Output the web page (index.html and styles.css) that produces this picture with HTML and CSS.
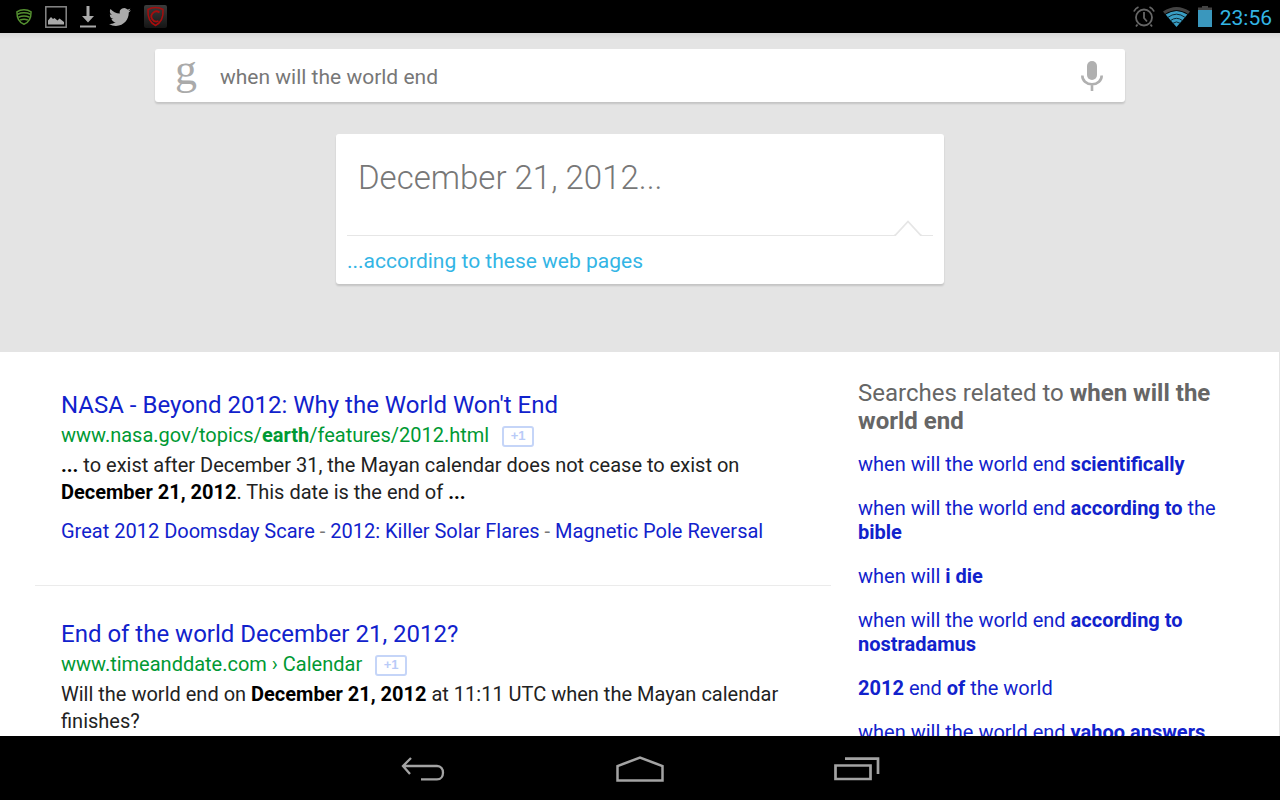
FILE: index.html
```
<!DOCTYPE html>
<html lang="en">
<head>
    <meta charset="UTF-8">
    <meta name="viewport" content="width=device-width, initial-scale=1">
    <title>when will the world end</title>
    <link rel="stylesheet" href="styles.css">
</head>
<body>
    <header class="status-bar">
        <div class="status-icons">
            <svg width="16" height="16" viewBox="0 0 16 16" fill="none" stroke="#549030" stroke-width="1.5">
                <path d="M8 .8C5.5 .8 3 1.4 .9 2.8 .9 8.5 2.5 13.5 8 15.2 13.500 13.5 15.1 8.5 15.1 2.8 13 1.4 10.5 .8 8 .8z"/>
                <path d="M1.5 5.2q6.5-2.800 13 0M2.500 8.200q5.500-2.400 11 0M4.200 11q3.800-1.700 7.600 0"/>
            </svg>
            <svg width="22" height="22" viewBox="0 0 22 22">
                <rect x=".8" y=".8" width="20.4" height="20.4" fill="none" stroke="#888" stroke-width="1.5"/>
                <path d="M3 18.500v-4l3-3.500 2 2 1.500-1 3 2.500 2-2 4.500 3.500v2.500z" fill="#aaa"/>
            </svg>
            <svg width="16" height="22" viewBox="0 0 16 22" fill="#aaa">
                <path d="M6.500 0h3v10H14l-6 6.500L2 10h4.500zM0 19.500h16v2H0z"/>
            </svg>
            <svg width="22" height="22" viewBox="0 0 24 24" fill="#aaa">
                <path d="M23.950 4.570a10 10 0 0 1-2.820.770 4.960 4.960 0 0 0 2.160-2.720c-.950.550-2 .950-3.120 1.180a4.920 4.920 0 0 0-8.380 4.480C7.690 8.090 4.070 6.130 1.640 3.160a4.820 4.820 0 0 0-.670 2.480c0 1.710.870 3.210 2.190 4.100a4.900 4.900 0 0 1-2.230-.620v.060a4.920 4.920 0 0 0 3.950 4.830 5 5 0 0 1-2.210.080 4.940 4.940 0 0 0 4.600 3.420A9.870 9.870 0 0 1 0 19.540a13.990 13.990 0 0 0 7.560 2.210c9.050 0 14-7.500 14-13.980 0-.210 0-.420-.020-.630a9.940 9.940 0 0 0 2.410-2.570z"/>
            </svg>
            <svg width="23" height="23" viewBox="0 0 23 23">
                <defs><linearGradient id="tile" x1="0" y1="0" x2="0" y2="1"><stop offset="0" stop-color="#3c3c3c"/><stop offset="1" stop-color="#151515"/></linearGradient></defs>
                <rect width="23" height="23" rx="2" fill="url(#tile)"/>
                <path d="M11.500 2.500c2.500 0 5 .5 7.500 2 .5 7-1.500 13-7.500 16-6-3-8-9-7.500-16 2.500-1.500 5-2 7.500-2z" fill="none" stroke="#a80d0d" stroke-width="1.500"/>
                <path d="M15.500 7.500a5 5 0 1 0-1 8.500" fill="none" stroke="#a80d0d" stroke-width="1.800"/>
            </svg>
        </div>
        <div class="status-icons status-right">
            <svg width="22" height="22" viewBox="0 0 22 22" fill="none" stroke="#666" stroke-width="1.8">
                <circle cx="11" cy="11.500" r="8"/>
                <path d="M11 6v6l3 3.500M.9 5.500Q2 2.500 5.500 1M21.100 5.500Q20 2.500 16.500 1M4.500 18.500L3 20.500M17.500 18.500l1.500 2"/>
            </svg>
            <svg width="27" height="20" viewBox="0 0 27 20">
                <path d="M0 4.500Q13.500-4.500 27 4.500L25 7Q13.500-.5 2 7z" fill="#444"/>
                <path d="M2.600 7.600Q13.500 .3 24.400 7.600L13.500 20z" fill="#3a9ec4"/>
                <path d="M4.700 10.500Q13.500 3.800 22.300 10.500M7.500 13.600Q13.500 9 19.500 13.600M9.800 16.300Q13.500 13.500 17.200 16.300" fill="none" stroke="#0d2833" stroke-width="1"/>
            </svg>
            <svg width="14" height="21" viewBox="0 0 14 21">
                <path d="M4 0h6v1.500h4V4H0V1.500h4z" fill="#444"/>
                <path d="M0 4h14v17H0z" fill="#3a97bd"/>
            </svg>
            <time class="clock">23:56</time>
        </div>
    </header>

    <main class="screen">
        <section class="top">
            <form class="search-box">
                <span class="logo" aria-hidden="true">g</span>
                <input class="search-input" type="text" aria-label="Search" value="when will the world end">
                <button class="mic" type="button" aria-label="Voice search">
                    <svg width="22" height="30" viewBox="0 0 22 30">
                        <rect x="6" y="0" width="10" height="19" rx="5" fill="#b0b0b0"/>
                        <path d="M1.300 14.500c0 5 4 8.800 9.700 8.800s9.700-3.800 9.700-8.800M11 23v7" fill="none" stroke="#b0b0b0" stroke-width="2.600"/>
                    </svg>
                </button>
            </form>
            <article class="answer-card">
                <h1 class="answer">December 21, 2012...</h1>
                <div class="divider">
                    <span class="line"></span>
                    <svg width="28" height="16" viewBox="0 0 28 16"><path d="M0 15.500h1L14 1.500l13 14h1" fill="none" stroke="#e6e6e6" stroke-width="1.800"/></svg>
                    <span class="line line-end"></span>
                </div>
                <a class="source" href="#results">...according to these web pages</a>
            </article>
        </section>

        <div class="columns">
            <section class="results" id="results">
                <article class="result">
                    <h2 class="title"><a href="#">NASA - Beyond 2012: Why the World Won't End</a></h2>
                    <div class="url">www.nasa.gov/topics/<b>earth</b>/features/2012.html <button class="plus" type="button">+1</button></div>
                    <p class="snippet"><b>...</b> to exist after December 31, the Mayan calendar does not cease to exist on <b>December 21, 2012</b>. This date is the end of <b>...</b></p>
                    <p class="sitelinks"><a href="#">Great 2012 Doomsday Scare</a> - <a href="#">2012: Killer Solar Flares</a> - <a href="#">Magnetic Pole Reversal</a></p>
                </article>
                <article class="result">
                    <h2 class="title"><a href="#">End of the world December 21, 2012?</a></h2>
                    <div class="url">www.timeanddate.com › Calendar <button class="plus" type="button">+1</button></div>
                    <p class="snippet">Will the world end on <b>December 21, 2012</b> at 11:11 UTC when the Mayan calendar finishes?</p>
                </article>
            </section>

            <aside class="related">
                <h2 class="related-title">Searches related to <b>when will the world end</b></h2>
                <ul class="related-list">
                    <li><a href="#">when will the world end <b>scientifically</b></a></li>
                    <li><a href="#">when will the world end <b>according to</b> the <b>bible</b></a></li>
                    <li><a href="#">when will <b>i die</b></a></li>
                    <li><a href="#">when will the world end <b>according to nostradamus</b></a></li>
                    <li><a href="#"><b>2012</b> end <b>of</b> the world</a></li>
                    <li><a href="#">when will the world end <b>yahoo answers</b></a></li>
                </ul>
            </aside>
        </div>
    </main>

    <nav class="nav-bar">
        <button class="nav-btn" type="button" aria-label="Back">
            <svg width="44" height="24" viewBox="0 0 44 24" fill="none" stroke="#a3a3a3" stroke-width="2.300">
                <path d="M2 9h34c8 0 8 13.300 0 13.300H20M10 1L2 9l7 8"/>
            </svg>
        </button>
        <button class="nav-btn" type="button" aria-label="Home">
            <svg width="48" height="26" viewBox="0 0 48 26" fill="none" stroke="#a3a3a3" stroke-width="2.500">
                <path d="M1.500 24.500V10L24 1.700 46.500 10v14.500z"/>
            </svg>
        </button>
        <button class="nav-btn" type="button" aria-label="Recent apps">
            <svg width="46" height="24" viewBox="0 0 46 24" fill="none" stroke="#a3a3a3" stroke-width="2.700">
                <path d="M1.500 8.500h35v13.500h-35zM11 1.700h33V17"/>
            </svg>
        </button>
    </nav>
</body>
</html>
```
FILE: styles.css
```
* {
    box-sizing: border-box;
}

body {
    margin: 0;
    height: 100vh;
    display: flex;
    flex-direction: column;
    background: #fff;
    color: #222;
    font-family: Roboto, "Liberation Sans", sans-serif;
    font-size: 20px;
}

h1, h2, p, ul {
    margin: 0;
    padding: 0;
    font-weight: 400;
}

a {
    color: #1122cc;
    text-decoration: none;
}

button {
    padding: 0;
    border: none;
    background: none;
    cursor: pointer;
}

svg {
    display: block;
}

.status-bar {
    flex: none;
    display: flex;
    justify-content: space-between;
    align-items: center;
    height: 33px;
    padding: 0 8px 0 16px;
    background: #000;
}

.status-icons {
    display: flex;
    align-items: center;
    gap: 13px;
}

.status-right {
    gap: 8px;
}

.clock {
    padding-top: 2px;
    font-size: 21px;
    line-height: 30px;
    color: #33b5e5;
}

.screen {
    flex: 1;
    min-height: 0;
    overflow: hidden;
}

.top {
    display: flex;
    flex-direction: column;
    align-items: center;
    gap: 32px;
    padding: 16px 16px 68px;
    background: linear-gradient(#d8d8d8, #e4e4e4 6px);
}

.search-box {
    display: flex;
    align-items: center;
    width: 100%;
    max-width: 970px;
    height: 53px;
    padding: 0 22px 0 20px;
    background: #fff;
    border-radius: 3px;
    box-shadow: 0 2px 2px rgba(0, 0, 0, .14);
}

.logo {
    width: 45px;
    padding-bottom: 12px;
    font: 44px/44px "Liberation Serif", serif;
    color: #aaa;
}

.search-input {
    flex: 1;
    min-width: 0;
    padding: 2px 0 0;
    border: none;
    outline: none;
    background: none;
    font: inherit;
    font-size: 21px;
    color: #777;
}

.answer-card {
    width: 100%;
    max-width: 608px;
    padding: 24px 11px 8px;
    background: #fff;
    border-radius: 3px;
    box-shadow: 0 2px 2px rgba(0, 0, 0, .14);
}

.answer {
    padding: 0 11px 22px;
    font-size: 33px;
    line-height: 40px;
    font-weight: 300;
    color: #777;
}

.divider {
    display: flex;
    align-items: flex-end;
}

.line {
    flex: 1;
    height: 1px;
    background: #e6e6e6;
}

.line-end {
    flex: 0 0 11px;
}

.source {
    display: block;
    padding-top: 10px;
    font-size: 21px;
    line-height: 30px;
    color: #33b5e5;
}

.columns {
    display: grid;
    grid-template-columns: 33fr 16fr;
    gap: 27px;
    padding: 0 35px;
    border-right: 1px solid #e4e4e4;
}

.result {
    padding: 38px 26px 39px;
}

.result + .result {
    border-top: 1px solid #ebebeb;
    padding-top: 33px;
}

.title {
    font-size: 24px;
    line-height: 30px;
}

.url {
    display: flex;
    align-items: center;
    line-height: 30px;
    color: #009933;
}

.plus {
    width: 32px;
    height: 21px;
    margin: 2px 0 0 13px;
    border: 2px solid #c5d5f8;
    border-radius: 3px;
    font: bold 13px/16px "Liberation Sans", sans-serif;
    color: #b9cbf8;
}

.snippet {
    padding-top: 2px;
    line-height: 27px;
}

.snippet b {
    color: #000;
}

.sitelinks {
    padding-top: 10px;
    line-height: 30px;
    color: #777;
}

.related {
    padding: 27px 20px 0 0;
}

.related-title {
    font-size: 24px;
    line-height: 28px;
    color: #666;
}

.related-list {
    display: grid;
    gap: 20px;
    padding-top: 17px;
    list-style: none;
    line-height: 24px;
}

.nav-bar {
    flex: none;
    display: flex;
    justify-content: center;
    align-items: center;
    gap: 120px;
    height: 64px;
    background: #000;
}

.nav-btn {
    display: flex;
    justify-content: center;
    width: 97px;
    padding-top: 2px;
}
```
